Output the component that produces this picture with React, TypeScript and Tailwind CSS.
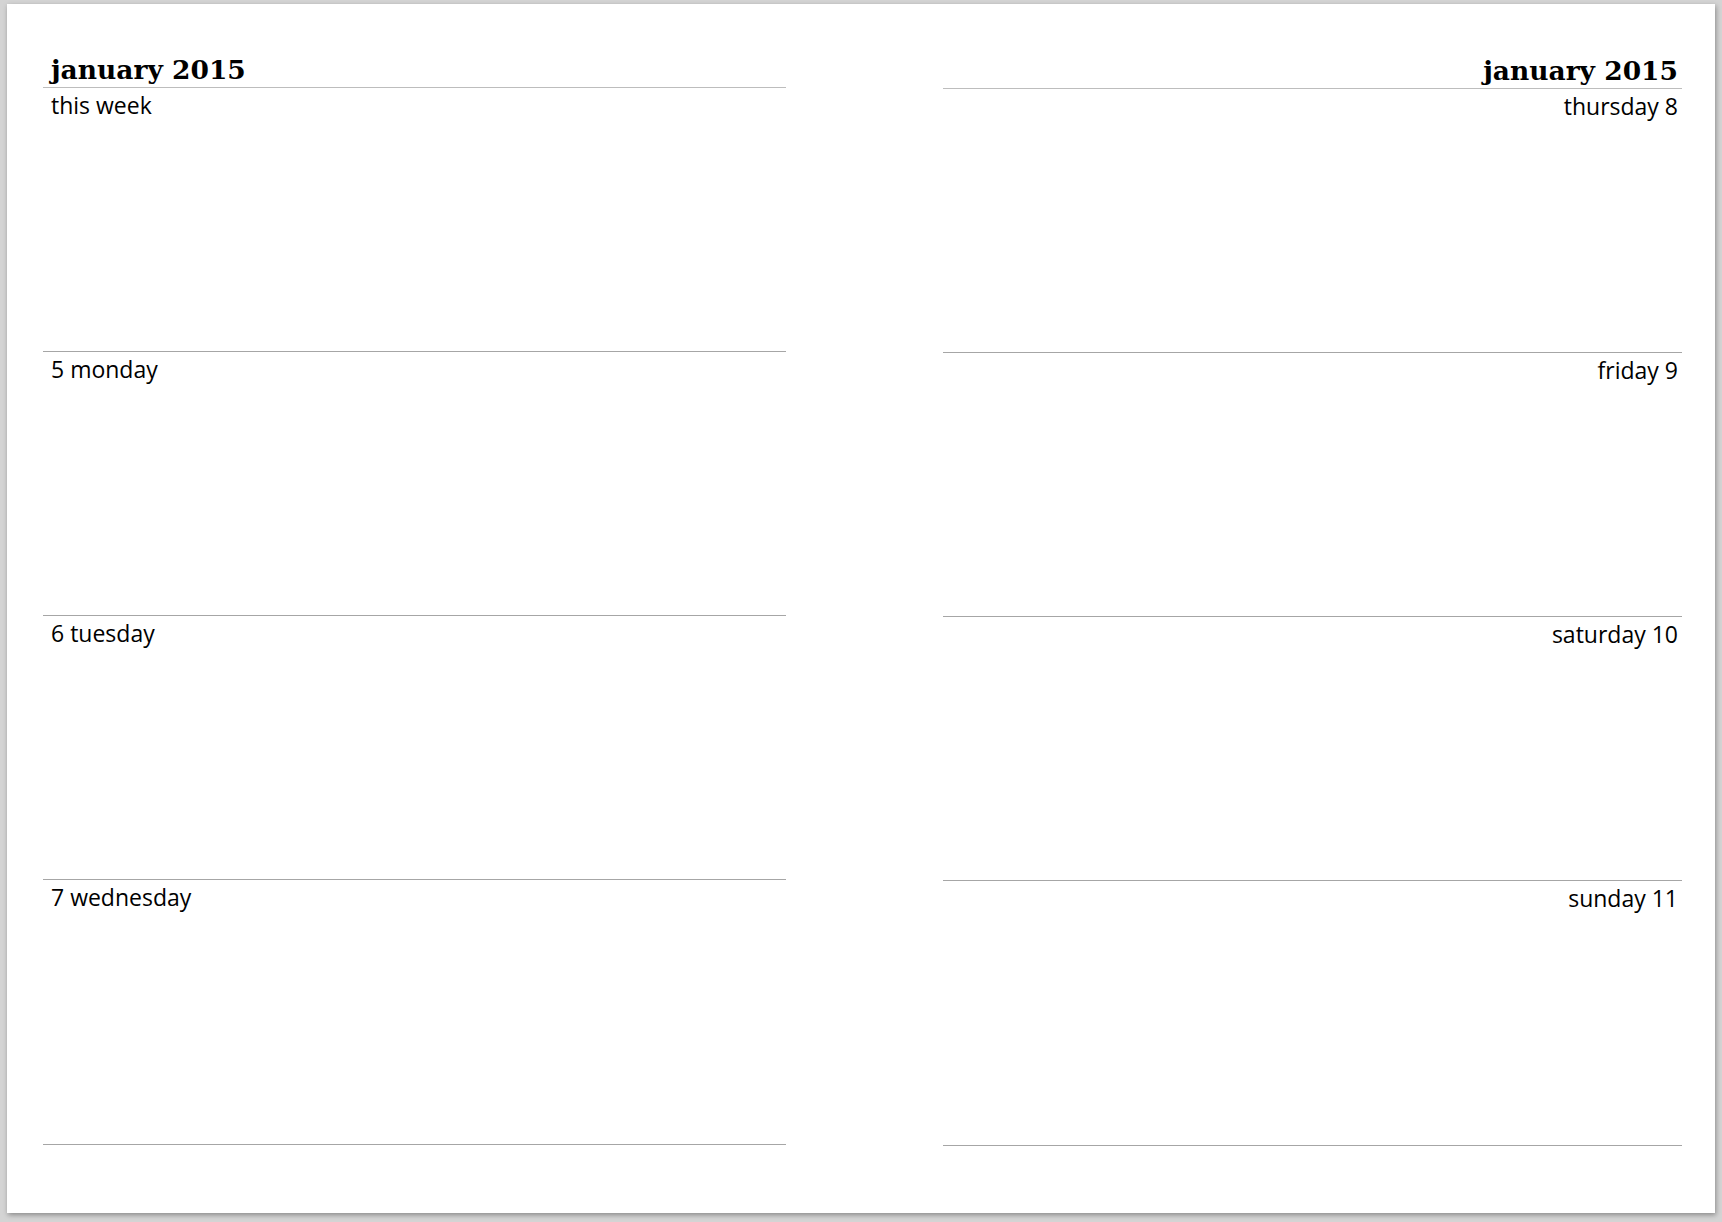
import React from "react";

const serif = { fontFamily: '"DejaVu Serif", serif' };

function Heading({ align }: { align: "left" | "right" }) {
  return (
    <div
      className={`mt-[51px] border-b border-[#bdbdbd] pb-[2px] text-[26.5px] font-bold leading-[30px] text-black ${
        align === "left" ? "pl-[8px] text-left" : "pr-[4px] text-right"
      }`}
      style={serif}
    >
      january 2015
    </div>
  );
}

function Section({
  label,
  align,
  last,
}: {
  label: string;
  align: "left" | "right";
  last?: boolean;
}) {
  return (
    <div
      className={`${last ? "h-[265px]" : "h-[264px]"} border-b border-[#a6a6a6] pt-[1px] text-[23px] leading-[32px] text-black ${
        align === "left" ? "pl-[8px] text-left" : "pr-[4px] text-right"
      }`}
    >
      {label}
    </div>
  );
}

export default function App() {
  const left = ["this week", "5 monday", "6 tuesday", "7 wednesday"];
  const right = ["thursday 8", "friday 9", "saturday 10", "sunday 11"];
  return (
    <div
      className="h-[1222px] w-[1722px] overflow-hidden bg-[#d4d4d4] pl-[7px] pt-[4px]"
      style={{ fontFamily: '"Open Sans", "Noto Sans", sans-serif' }}
    >
      <div className="flex h-[1209px] w-[1708px] bg-white shadow-[1px_2px_5px_rgba(0,0,0,0.35)]">
        <div className="ml-[36px] w-[743px]">
          <Heading align="left" />
          {left.map((l, i) => (
            <Section key={l} label={l} align="left" last={i === 3} />
          ))}
        </div>
        <div className="ml-[157px] w-[739px] pt-[1px]">
          <Heading align="right" />
          {right.map((l, i) => (
            <Section key={l} label={l} align="right" last={i === 3} />
          ))}
        </div>
      </div>
    </div>
  );
}
